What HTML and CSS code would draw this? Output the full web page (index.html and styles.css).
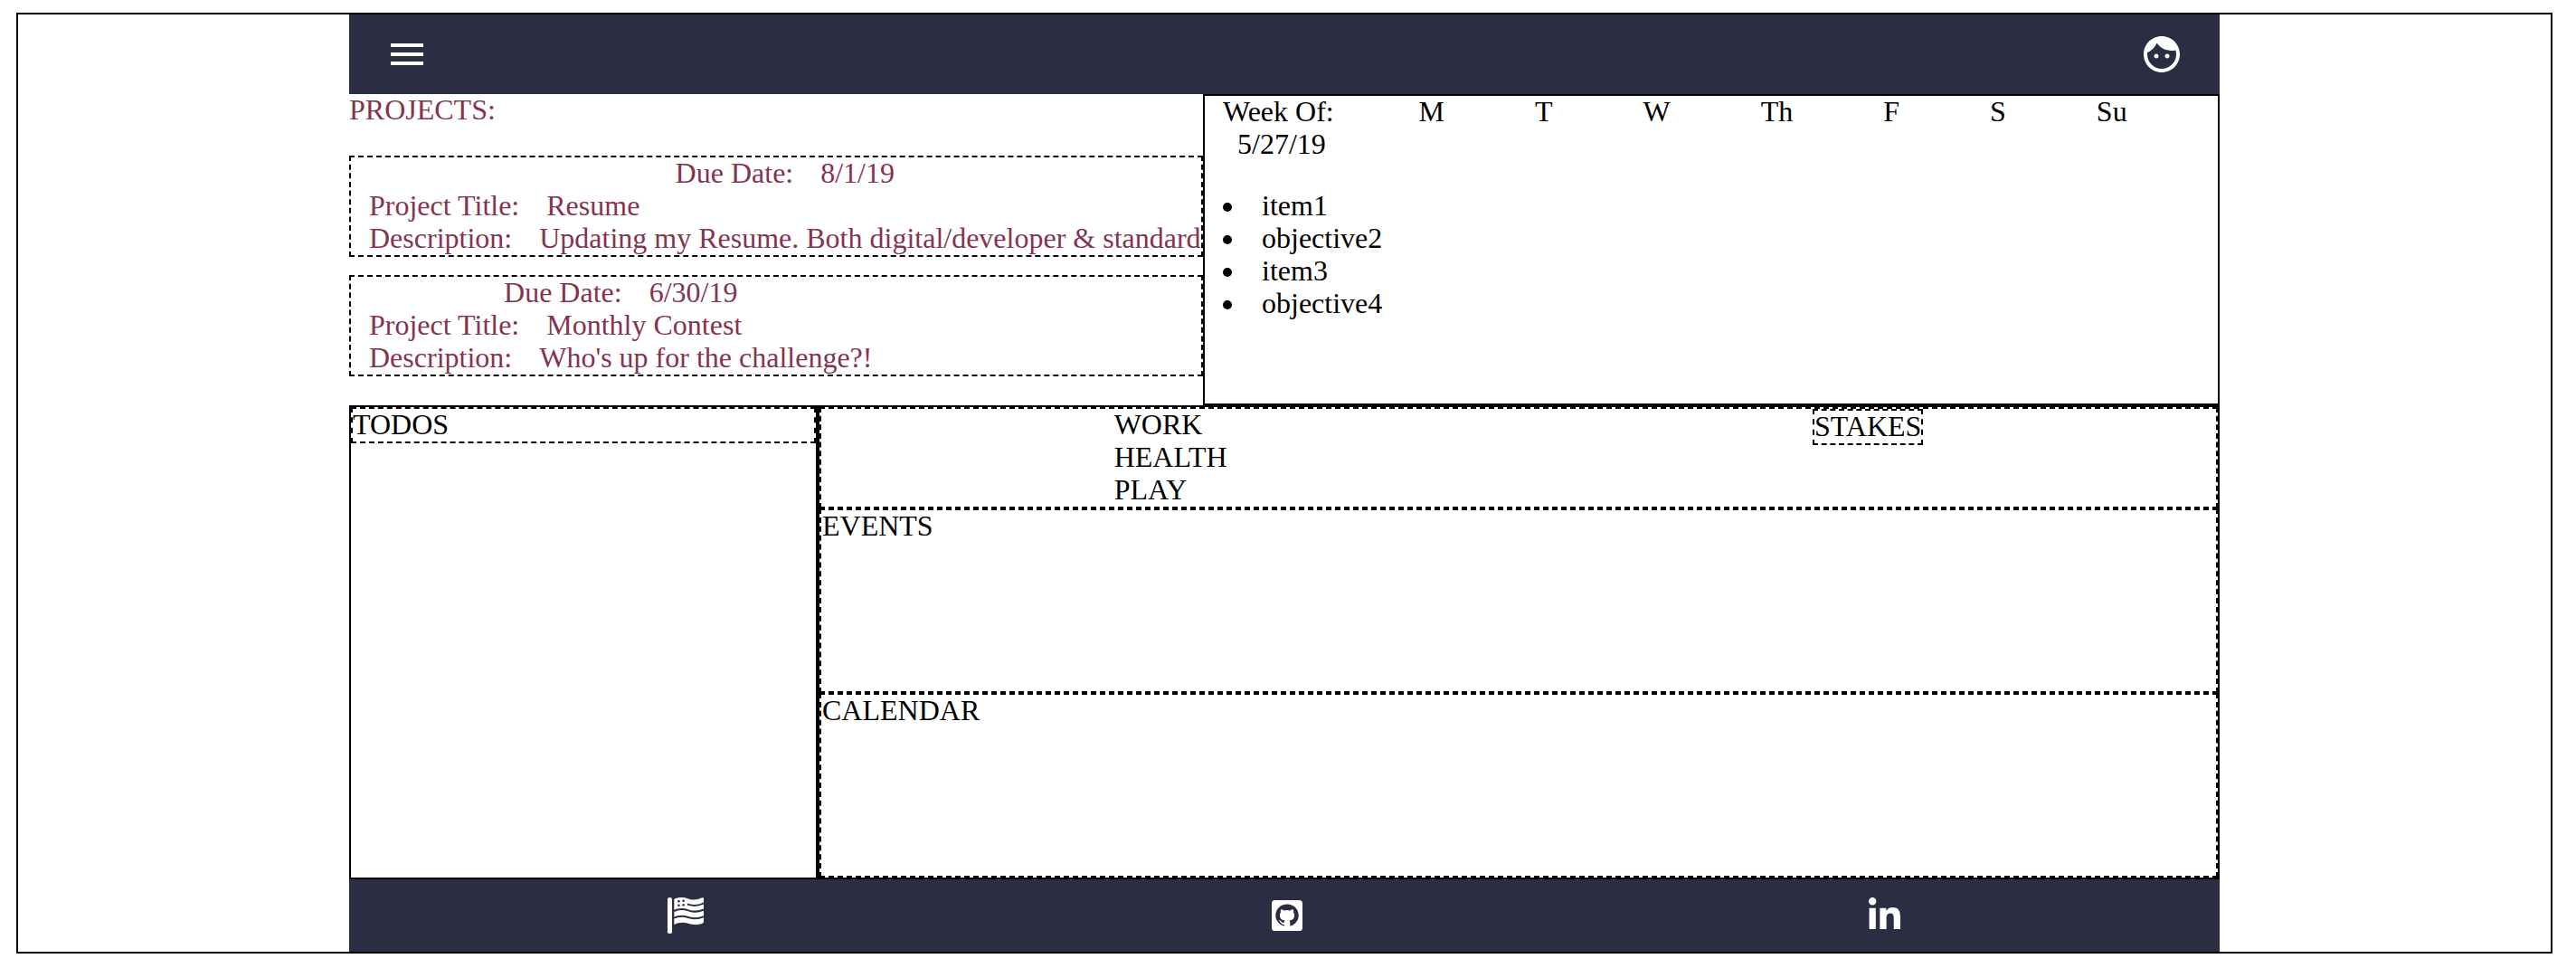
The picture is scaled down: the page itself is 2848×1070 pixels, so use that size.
FILE: index.html
```html
<!DOCTYPE html>
<html lang="en">
<head>
<meta charset="utf-8">
<title>Planner</title>
<link rel="stylesheet" href="styles.css">
</head>
<body>
<div class="frame">
<div class="app">
  <header class="header">
    <svg class="nav-icon" viewBox="0 0 24 24"><path d="M3 18h18v-2H3v2zm0-5h18v-2H3v2zm0-7v2h18V6H3z"/></svg>
    <svg class="nav-icon" viewBox="0 0 24 24"><path d="M9 11.75c-.69 0-1.25.56-1.25 1.25s.56 1.25 1.25 1.25 1.25-.56 1.25-1.25-.56-1.25-1.25-1.25zm6 0c-.69 0-1.25.56-1.25 1.25s.56 1.25 1.25 1.25 1.25-.56 1.25-1.25-.56-1.25-1.25-1.25zM12 2C6.48 2 2 6.48 2 12s4.48 10 10 10 10-4.48 10-10S17.52 2 12 2zm0 18c-4.41 0-8-3.59-8-8 0-.29.02-.58.05-.86 2.36-1.05 4.23-2.98 5.21-5.37C11.07 8.33 14.05 10 17.42 10c.78 0 1.53-.09 2.25-.26.21.71.33 1.47.33 2.26 0 4.41-3.59 8-8 8z"/></svg>
  </header>
  <div class="top">
    <section class="projects">
      <div class="projects-title line">PROJECTS:</div>
      <article class="project"><div class="project-body">
        <div class="line due">Due Date:<span class="value">8/1/19</span></div>
        <div class="line">Project Title:<span class="value">Resume</span></div>
        <div class="line">Description:<span class="value">Updating my Resume. Both digital/developer &amp; standard</span></div>
      </div></article>
      <article class="project"><div class="project-body">
        <div class="line due">Due Date:<span class="value">6/30/19</span></div>
        <div class="line">Project Title:<span class="value">Monthly Contest</span></div>
        <div class="line">Description:<span class="value">Who's up for the challenge?!</span></div>
      </div></article>
    </section>
    <section class="week">
      <div class="days">
        <div class="week-of"><div class="line">Week Of:</div><div class="line date">5/27/19</div></div>
        <div class="line">M</div><div class="line">T</div><div class="line">W</div><div class="line">Th</div><div class="line">F</div><div class="line">S</div><div class="line">Su</div>
      </div>
      <ul class="goals"><li class="line">item1</li><li class="line">objective2</li><li class="line">item3</li><li class="line">objective4</li></ul>
    </section>
  </div>
  <div class="bottom">
    <section class="todos"><div class="dashed"><div class="line">TODOS</div></div></section>
    <section class="main">
      <div class="dashed areas">
        <div><div class="line">WORK</div><div class="line">HEALTH</div><div class="line">PLAY</div></div>
        <div class="dashed"><div class="line">STAKES</div></div>
      </div>
      <div class="dashed panel"><div class="line">EVENTS</div></div>
      <div class="dashed panel"><div class="line">CALENDAR</div></div>
    </section>
  </div>
  <footer class="footer">
    <svg class="flag" viewBox="0 0 40 40">
      <path d="M0 1.5Q0 0 2.5 0T5 1.5V38.500Q5 40 2.500 40T0 38.500z"/>
      <path d="M7.300 2C12 -.3 17 -.6 23 1.400C29 3.400 33 2.600 38 .3Q40 -.3 40 1.500V26.500Q40 28 38.500 28.700C33 30.700 29 30.500 23 28.700C17 27 12 27.600 7.300 30z"/>
      <g class="waves"><path d="M22 7.300C28 10 34 9.300 40.500 6.300"/><path d="M7 15C12 12.600 17 12.400 23 14.400C29 16.400 34 16.200 40.500 13.500"/><path d="M7 22.700C12 20.300 17 20 23 22C29 24 34 23.800 40.500 21"/></g>
      <g class="dark"><circle cx="12.400" cy="4.200" r="1.300"/><circle cx="17.600" cy="3.700" r="1.300"/><circle cx="12.400" cy="8.700" r="1.300"/><circle cx="17.600" cy="8.200" r="1.300"/></g>
    </svg>
    <svg class="github" viewBox="0 0 34 34">
      <rect width="34" height="34" rx="3.600"/>
      <path class="dark" d="M14 28.800C8.500 27.300 4.300 22.700 4.300 16.900C4.300 9.800 9.900 4.500 17 4.500S29.700 9.800 29.700 16.900C29.700 22.700 25.500 27.300 20 28.800z"/>
      <path d="M10.200 10.200C11.700 9.900 13 10.800 14 11.500Q17 10.700 20 11.500C21 10.800 22.300 9.900 23.800 10.200Q24.500 12 24 13.500Q25.300 15 25 17.400C24.800 20.500 23 22 19.600 22.500Q20.300 23.300 20.300 25V30H13.800V26.700C10.500 27.300 10 24.500 8.800 23.500L7.400 22.300C9.200 21.700 10.300 23.100 11 24Q12 25.300 13.800 24.600Q13.900 23.200 14.500 22.500C11 22 9.200 20.500 9 17.400Q8.700 15 10 13.500Q9.500 12 10.200 10.200z"/>
    </svg>
    <svg class="linkedin" viewBox="0 0 448 448"><path d="M100.280 448H7.400V148.900h92.880zM53.790 108.100C24.090 108.100 0 83.500 0 53.800a53.790 53.790 0 0 1 107.580 0c0 29.700-24.100 54.300-53.790 54.300zM447.900 448h-92.680V302.400c0-34.700-.7-79.200-48.290-79.200-48.290 0-55.690 37.700-55.690 76.700V448h-92.780V148.900h89.080v40.800h1.300c12.400-23.500 42.690-48.300 87.880-48.300 94 0 111.280 61.900 111.280 142.300V448z"/></svg>
  </footer>
</div>
</div>
</body>
</html>
```
FILE: styles.css
```css
* { box-sizing: border-box; }
body { margin: 0; padding: 14px 26px 16px 18px; background: #fff; color: #000; font: 32px/36px "Liberation Serif", "Times New Roman", serif; }
.frame { height: 1040px; border: 2px solid #000; padding: 0 366px; }
.header { height: 88px; padding: 0 40px; display: flex; align-items: center; justify-content: space-between; background: #2b2d42; }
svg { display: block; fill: #fff; flex: none; }
.dark { fill: #2b2d42; }
.waves { fill: none; stroke: #2b2d42; stroke-width: 2; }
.nav-icon { width: 48px; height: 48px; }
.line { height: 36px; line-height: 34px; }
.top { display: grid; grid-template-columns: 944px 1fr; height: 344px; }
.projects { color: #843450; }
.projects-title { margin-bottom: 32px; }
.project { border: 2px dashed #000; padding-left: 20px; margin-bottom: 20px; white-space: nowrap; }
.project-body { width: max-content; }
.due { text-align: center; }
.value { margin-left: 30px; }
.week { border: 2px solid #000; padding-left: 20px; }
.days { display: flex; gap: 100px; }
.week-of { width: 116.5px; white-space: nowrap; }
.date { padding-left: 16px; }
.goals { list-style: none; margin: 32px 0 0; padding: 0; }
.goals li { display: flex; }
.goals li::before { content: ""; width: 10px; height: 10px; margin: 14px 33px 0 0; border-radius: 50%; background: #000; }
.bottom { display: grid; grid-template-columns: 518px 1fr; height: 524px; }
.todos, .main { border: 2px solid #000; }
.dashed { border: 2px dashed #000; }
.main { display: flex; flex-direction: column; }
.areas { display: flex; justify-content: space-around; align-items: flex-start; }
.panel { flex: 1; padding-left: 1px; }
.footer { height: 80px; padding-left: 352px; display: flex; align-items: center; background: #2b2d42; }
.flag { width: 40px; height: 40px; margin-right: 628px; }
.github { width: 34px; height: 34px; margin-right: 626px; }
.linkedin { width: 35px; height: 35px; margin-bottom: 5px; }
```
